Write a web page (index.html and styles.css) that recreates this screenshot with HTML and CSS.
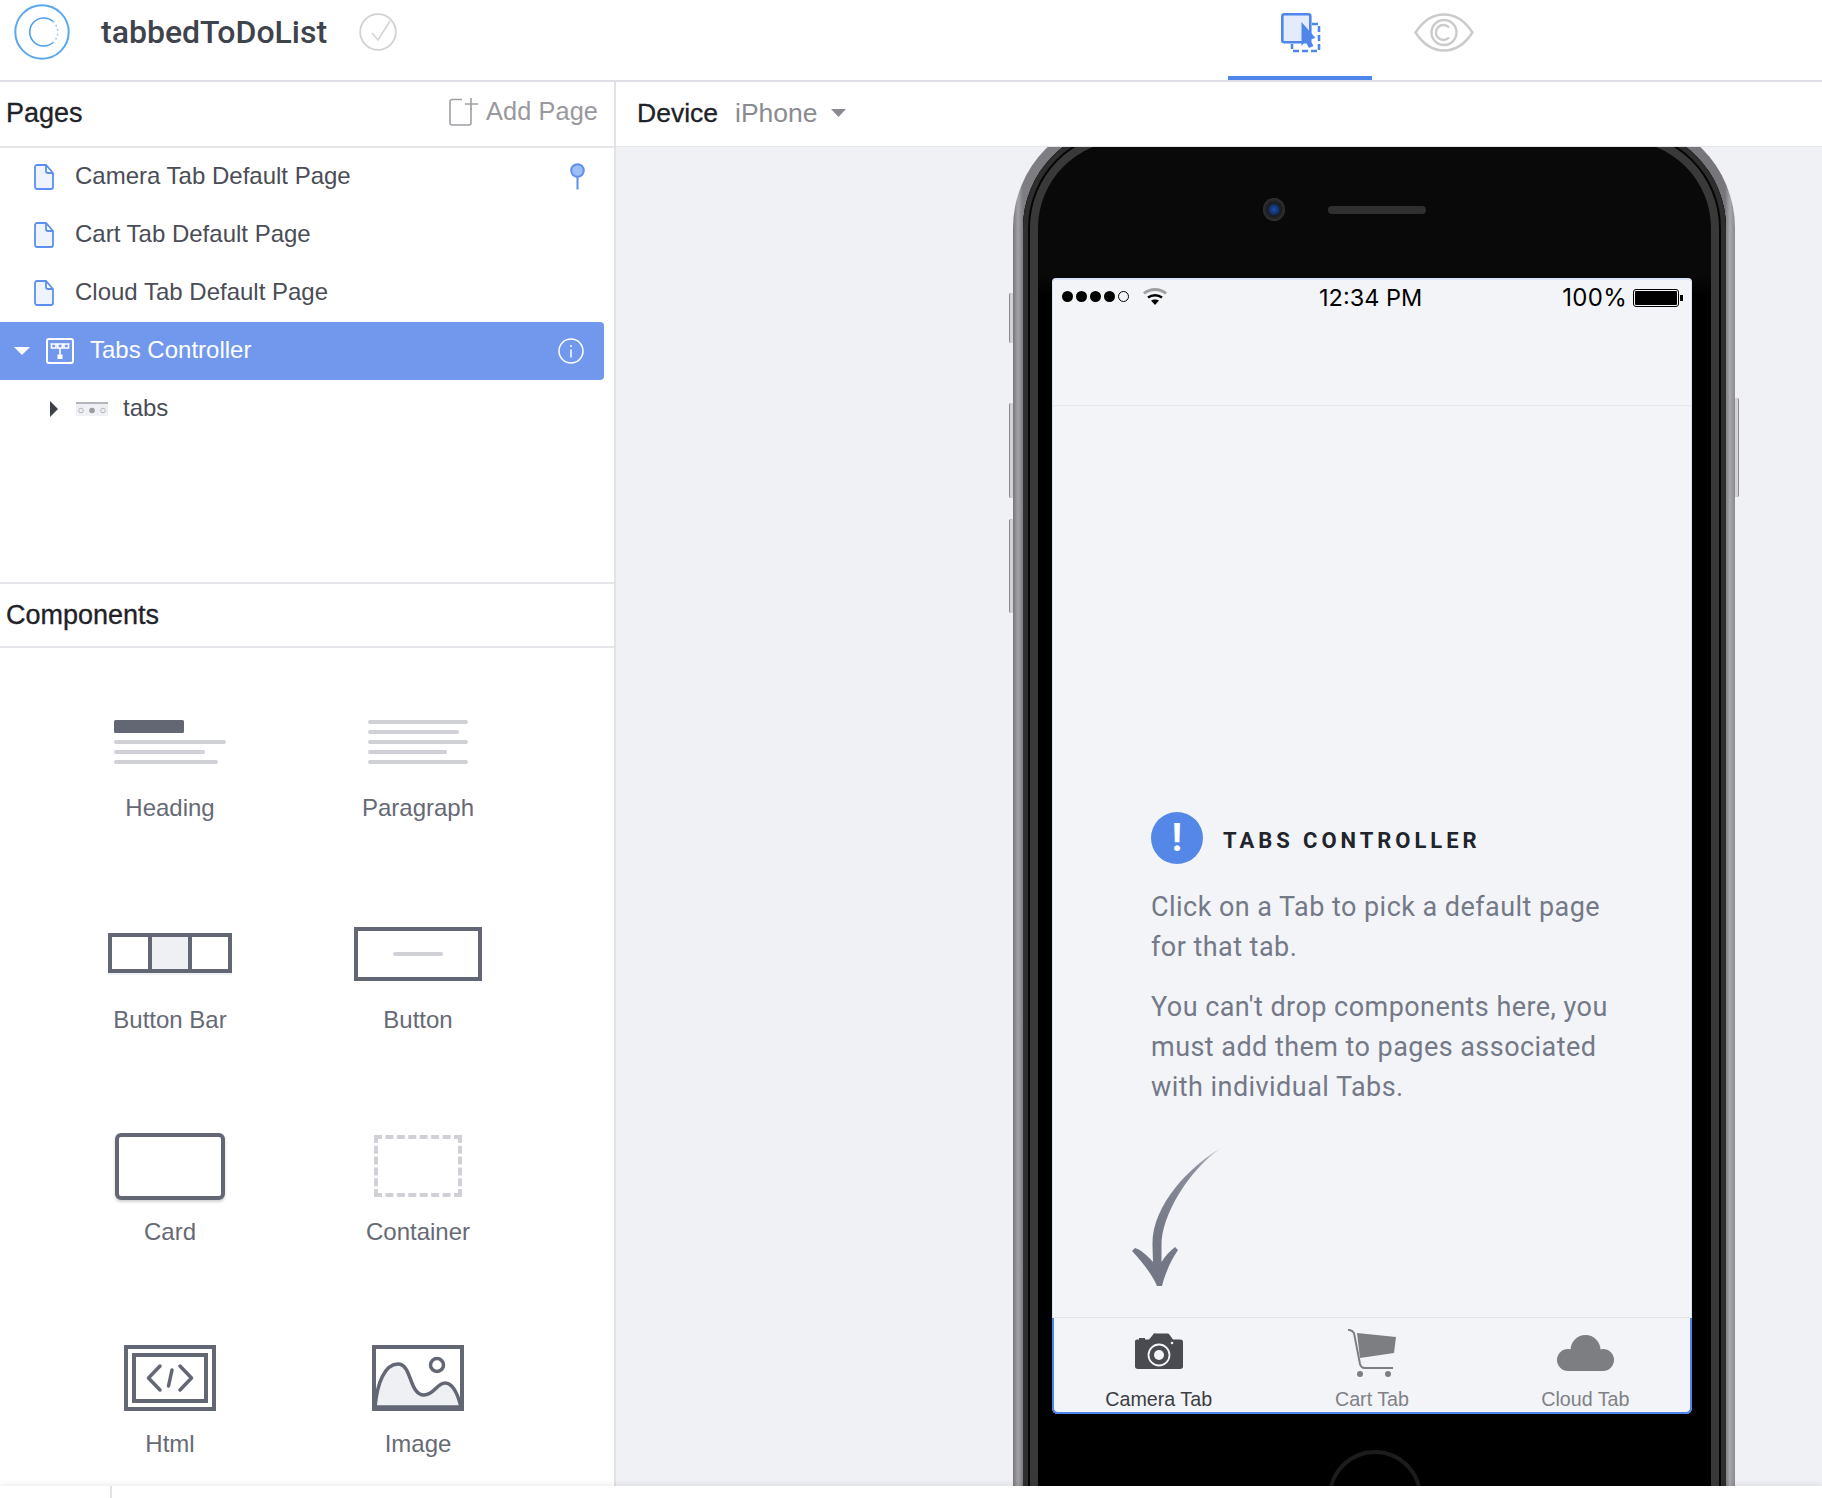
FILE: index.html
```html
<!DOCTYPE html>
<html>
<head lang="en">
    <meta charset="UTF-8">
    <title>tabbedToDoList</title>
    <link rel="stylesheet" href="styles.css">
</head>
<body>
    <header class="topbar">
        <div class="brand">
            <svg class="logo" width="56" height="56" viewBox="0 0 56 56" fill="none">
                <circle cx="28" cy="28" r="26.7" stroke="#5ba8f2" stroke-width="2"/>
                <path d="M39 17.5A14 14 0 1 0 39 38.5" stroke="#4d9cec" stroke-width="1.6"/>
                <path d="M39 17.5A14 14 0 0 1 39 38.5" stroke="#7db9f3" stroke-width="1.4" stroke-dasharray="1.5 3"/>
            </svg>
            <span class="app-name">tabbedToDoList</span>
            <svg class="saved" width="40" height="40" viewBox="0 0 40 40" fill="none" stroke="#d2d2d5" stroke-width="1.8">
                <circle cx="19" cy="20" r="17.8"/>
                <path d="M13 21l6 7L31 9" stroke-width="1.500"/>
            </svg>
        </div>
        <nav class="mode-tabs">
            <div class="mode-tab active">
                <svg width="40" height="40" viewBox="0 0 40 40" fill="none">
                    <rect x="1.3" y="1.3" width="28" height="28" rx="2" fill="#e4ebfb" stroke="#4f86ec" stroke-width="2.6"/>
                    <path d="M31 11h7v27H11v-7" stroke="#4f86ec" stroke-width="2.6" stroke-dasharray="6 3"/>
                    <path d="M20.500 9L34.500 25L29 26.500L32.500 33L28 35L24.500 28.500L20.500 33Z" fill="#4f86ec"/>
                </svg>
            </div>
            <div class="mode-tab">
                <svg width="60" height="40" viewBox="0 0 60 40" fill="none" stroke="#cbcbce" stroke-width="2.4">
                    <path d="M1.500 19.500C9 8 18 1.500 30 1.500S51 8 58.500 19.500C51 31 42 37.500 30 37.500S9 31 1.500 19.500Z"/>
                    <circle cx="30" cy="19.500" r="12.500"/>
                    <path d="M35 14.500A7.500 7.500 0 1 0 35 24.500"/>
                </svg>
            </div>
        </nav>
    </header>

    <main class="workspace">
        <aside class="sidebar">
            <div class="section-head">
                <h2>Pages</h2>
                <div class="add-page">
                    <svg width="29" height="28" viewBox="0 0 29 28" fill="none" stroke="#a0a0a5" stroke-width="1.6">
                        <path d="M13 1.500H3a2 2 0 0 0-2 2V25a2 2 0 0 0 2 2h17a2 2 0 0 0 2-2V10"/>
                        <path d="M22 0v12M16 6h13"/>
                    </svg>
                    <span>Add Page</span>
                </div>
            </div>
            <ul class="tree">
                <li class="tree-row page-row">
                    <svg class="page-icon" width="20" height="26" viewBox="0 0 20 26"><path d="M1 3a2 2 0 0 1 2-2h9l7 8v14a2 2 0 0 1-2 2H3a2 2 0 0 1-2-2Z M12 1v6a2 2 0 0 0 2 2h5"/></svg>
                    <span>Camera Tab Default Page</span>
                    <svg class="pin" width="15" height="27" viewBox="0 0 15 27">
                        <path d="M7.500 12v14.500" stroke="#5d8fee" stroke-width="2"/>
                        <circle cx="7.500" cy="7.500" r="6.300" fill="#9dbdf5" stroke="#5d8fee" stroke-width="2"/>
                    </svg>
                </li>
                <li class="tree-row page-row">
                    <svg class="page-icon" width="20" height="26" viewBox="0 0 20 26"><path d="M1 3a2 2 0 0 1 2-2h9l7 8v14a2 2 0 0 1-2 2H3a2 2 0 0 1-2-2Z M12 1v6a2 2 0 0 0 2 2h5"/></svg>
                    <span>Cart Tab Default Page</span>
                </li>
                <li class="tree-row page-row">
                    <svg class="page-icon" width="20" height="26" viewBox="0 0 20 26"><path d="M1 3a2 2 0 0 1 2-2h9l7 8v14a2 2 0 0 1-2 2H3a2 2 0 0 1-2-2Z M12 1v6a2 2 0 0 0 2 2h5"/></svg>
                    <span>Cloud Tab Default Page</span>
                </li>
                <li class="tree-row selected">
                    <svg class="caret-down" width="16" height="8" viewBox="0 0 16 8"><path d="M0 0h16L8 8Z" fill="#fff"/></svg>
                    <svg width="28" height="26" viewBox="0 0 28 26" fill="none" stroke="#fff" stroke-width="2">
                        <rect x="1" y="1" width="26" height="24" rx="2"/>
                        <path d="M4.500 6h19M5.500 6v4h4.500v-4M11.800 6v4h4.500v-4M18 6v4h4.500v-4M14 10v7" stroke-width="1.600"/>
                        <rect x="11.500" y="16.500" width="5" height="4.500" fill="#fff" stroke="none"/>
                    </svg>
                    <span>Tabs Controller</span>
                    <svg class="info" width="26" height="26" viewBox="0 0 26 26" fill="none" stroke="#fff" stroke-width="1.500">
                        <circle cx="13" cy="13" r="12"/>
                        <path d="M13 11.500V19.500M13 7v2"/>
                    </svg>
                </li>
                <li class="tree-row child-row">
                    <svg class="caret-right" width="8" height="16" viewBox="0 0 8 16"><path d="M0 0l8 8-8 8Z" fill="#3c4049"/></svg>
                    <svg width="32" height="14" viewBox="0 0 32 14">
                        <rect width="32" height="14" fill="#eff0f4"/>
                        <rect width="32" height="2" fill="#b5b6bb"/>
                        <circle cx="5" cy="8.500" r="2.300" fill="none" stroke="#b5b6bb"/>
                        <circle cx="16" cy="8.500" r="2.800" fill="#9a9ba1"/>
                        <circle cx="27" cy="8.500" r="2.300" fill="none" stroke="#b5b6bb"/>
                    </svg>
                    <span>tabs</span>
                </li>
            </ul>
            <div class="section-head components-head">
                <h2>Components</h2>
            </div>
            <div class="component-grid">
                <div class="component">
                    <div class="component-icon">
                        <svg width="112" height="44" viewBox="0 0 112 44">
                            <rect width="70" height="13" rx="1.500" fill="#636773"/>
                            <rect y="20" width="112" height="4" rx="2" fill="#d0d1d6"/>
                            <rect y="30" width="91" height="4" rx="2" fill="#d0d1d6"/>
                            <rect y="40" width="104" height="4" rx="2" fill="#d0d1d6"/>
                        </svg>
                    </div>
                    <span>Heading</span>
                </div>
                <div class="component">
                    <div class="component-icon">
                        <svg width="100" height="44" viewBox="0 0 100 44" fill="#d0d1d6">
                            <rect width="100" height="4" rx="2"/>
                            <rect y="10" width="91" height="4" rx="2"/>
                            <rect y="20" width="100" height="4" rx="2"/>
                            <rect y="30" width="79" height="4" rx="2"/>
                            <rect y="40" width="100" height="4" rx="2"/>
                        </svg>
                    </div>
                    <span>Paragraph</span>
                </div>
                <div class="component">
                    <div class="component-icon">
                        <svg width="124" height="42" viewBox="0 0 124 42">
                            <rect y="40" width="124" height="2" fill="#eff0f4"/>
                            <rect x="41" y="2" width="41" height="36" fill="#eff0f4"/>
                            <path d="M2 2h120v36H2ZM42 2v36M82 2v36" fill="none" stroke="#636773" stroke-width="4"/>
                        </svg>
                    </div>
                    <span>Button Bar</span>
                </div>
                <div class="component">
                    <div class="component-icon">
                        <svg width="128" height="54" viewBox="0 0 128 54">
                            <rect x="2" y="2" width="124" height="50" fill="none" stroke="#636773" stroke-width="4"/>
                            <rect x="39" y="25" width="50" height="4" rx="2" fill="#d0d1d6"/>
                        </svg>
                    </div>
                    <span>Button</span>
                </div>
                <div class="component">
                    <div class="component-icon">
                        <div class="card-shape"></div>
                    </div>
                    <span>Card</span>
                </div>
                <div class="component">
                    <div class="component-icon">
                        <div class="container-shape"></div>
                    </div>
                    <span>Container</span>
                </div>
                <div class="component">
                    <div class="component-icon">
                        <svg width="92" height="66" viewBox="0 0 92 66" fill="none" stroke="#636773">
                            <rect x="2" y="2" width="88" height="62" stroke-width="4"/>
                            <rect x="10" y="10" width="72" height="46" stroke-width="4"/>
                            <path d="M36 21L24.500 33L36 45M56 21L67.500 33L56 45M48 25L44.500 41" stroke-width="3.500" stroke-linecap="round" stroke-linejoin="round"/>
                        </svg>
                    </div>
                    <span>Html</span>
                </div>
                <div class="component">
                    <div class="component-icon">
                        <svg width="92" height="66" viewBox="0 0 92 66" fill="none" stroke="#636773">
                            <path d="M3 62C5 38 13 19 26 19C40 19 37 50 52 50C62 50 65 38 73 38C81 38 86 50 89 62Z" fill="#eff0f4" stroke-width="3.500"/>
                            <rect x="2" y="2" width="88" height="62" stroke-width="4"/>
                            <circle cx="65" cy="20" r="6.500" stroke-width="3.500"/>
                        </svg>
                    </div>
                    <span>Image</span>
                </div>
            </div>
        </aside>

        <section class="stage">
            <div class="device-bar">
                <strong>Device</strong>
                <span class="device-name">iPhone</span>
                <svg width="15" height="8" viewBox="0 0 15 8"><path d="M0 0h15L7.500 8Z" fill="#8a8b91"/></svg>
            </div>
            <div class="canvas">
                <div class="phone">
                    <i class="side-btn btn-mute"></i>
                    <i class="side-btn btn-up"></i>
                    <i class="side-btn btn-down"></i>
                    <i class="side-btn btn-power"></i>
                    <div class="bezel">
                        <div class="phone-front">
                            <div class="front-camera"></div>
                            <div class="speaker"></div>
                        </div>
                        <div class="screen">
                            <div class="status-bar">
                                <div class="signal"><i></i><i></i><i></i><i></i><i class="off"></i></div>
                                <svg class="wifi" width="24" height="18" viewBox="0 0 24 18" fill="none">
                                    <path d="M1 6.500C7 1 17 1 23 6.500" stroke="#a0a0a0" stroke-width="3"/>
                                    <path d="M5 10.500C9 7.500 15 7.500 19 10.500" stroke="#000" stroke-width="2.500"/>
                                    <path d="M8 13.500L12 18L16 13.500C14 12 10 12 8 13.500Z" fill="#000"/>
                                </svg>
                                <span class="clock">12:34 PM</span>
                                <span class="percent">100%</span>
                                <div class="battery"><div class="battery-level"></div></div>
                            </div>
                            <div class="screen-body">
                                <div class="notice-head">
                                    <div class="notice-icon">!</div>
                                    <h3>TABS CONTROLLER</h3>
                                </div>
                                <p>Click on a Tab to pick a default page for that tab.</p>
                                <p>You can't drop components here, you must add them to pages associated with individual Tabs.</p>
                                <svg class="arrow" width="92" height="142" viewBox="0 0 92 142">
                                    <defs>
                                        <linearGradient id="arrowFill" x1="0.950" y1="0" x2="0.300" y2="0.700">
                                            <stop offset="0" stop-color="#c9cbd3"/>
                                            <stop offset="0.250" stop-color="#8d909c"/>
                                            <stop offset="1" stop-color="#747886"/>
                                        </linearGradient>
                                    </defs>
                                    <path d="M91 2C60 20 21 60 22.500 100L23 116C18 110 10 103 5 102L2 105C12 116 22 128 27 140L32 140C35 128 41 114 48 104L45 101C40 105 35 110 31.500 116L31.500 100C31 70 58 25 91 2Z" fill="url(#arrowFill)"/>
                                </svg>
                            </div>
                            <div class="tab-bar">
                                <div class="tab current">
                                    <svg width="48" height="48" viewBox="0 0 48 48">
                                        <path d="M2 8H4V6H10V8H14L18 2C18.500 1 19 0 20.500 6e-1H32C33 6e-1 34 1 34.500 2L38 8H45A3 3 0 0 1 48 11V41A3 3 0 0 1 45 44H3A3 3 0 0 1 0 41V10A2 2 0 0 1 2 8Z" fill="#4a4b50" transform="translate(0 4) scale(1 .82)"/>
                                        <circle cx="24" cy="26" r="10.500" fill="none" stroke="#f3f4f8" stroke-width="1.800"/>
                                        <circle cx="24" cy="26" r="5" fill="#f3f4f8"/>
                                        <circle cx="37" cy="14" r="1.300" fill="#f3f4f8"/>
                                    </svg>
                                    <span>Camera Tab</span>
                                </div>
                                <div class="tab">
                                    <svg width="48" height="48" viewBox="0 0 48 48" fill="#7d7e82">
                                        <path d="M0 .800Q4 .800 6 4L12 35Q13 39 17 39H45" fill="none" stroke="#7d7e82" stroke-width="2"/>
                                        <path d="M9 4L48 8L46 24L12 29Z"/>
                                        <circle cx="12" cy="45" r="3"/>
                                        <circle cx="40" cy="45" r="3"/>
                                    </svg>
                                    <span>Cart Tab</span>
                                </div>
                                <div class="tab">
                                    <svg width="57" height="48" viewBox="0 0 57 48" fill="#7d7e82">
                                        <circle cx="28.500" cy="21" r="15"/>
                                        <circle cx="11" cy="31" r="11"/>
                                        <circle cx="46" cy="31" r="11"/>
                                        <rect x="11" y="26" width="35" height="16"/>
                                    </svg>
                                    <span>Cloud Tab</span>
                                </div>
                            </div>
                        </div>
                        <div class="home-button"></div>
                    </div>
                </div>
            </div>
        </section>
    </main>
    <footer class="bottom-bar"><div class="bottom-cell"></div></footer>
</body>
</html>
```
FILE: styles.css
```css
*{
    padding: 0;
    margin: 0;
    box-sizing: border-box;
}
html, body{
    height: 1498px;
    overflow: hidden;
    background: #fff;
}
body{
    font-family: "Liberation Sans", Arial, sans-serif;
    color: #3c4049;
}
svg{
    display: block;
    flex: none;
}
ul{
    list-style: none;
}

/* top bar */
.topbar{
    height: 82px;
    display: flex;
    border-bottom: 2px solid #dfdfe5;
}
.brand{
    height: 64px;
    display: flex;
    align-items: center;
    padding-left: 14px;
}
.app-name{
    margin-left: 31px;
    font-family: Roboto, sans-serif;
    font-weight: 500;
    font-size: 32px;
    color: #3f434c;
}
.saved{
    margin-left: 32px;
}
.mode-tabs{
    display: flex;
    margin-left: auto;
    margin-right: 306px;
}
.mode-tab{
    width: 144px;
    height: 80px;
    display: flex;
    justify-content: center;
    padding-top: 13px;
}
.mode-tab.active{
    border-bottom: 4px solid #4f86ec;
}
.mode-tab.active svg{
    margin-left: 2px;
}

/* layout */
.workspace{
    height: 1404px;
    display: flex;
}
.sidebar{
    width: 616px;
    flex: none;
    border-right: 2px solid #e2e2e7;
    overflow: hidden;
}
.stage{
    flex: 1;
    display: flex;
    flex-direction: column;
    min-width: 0;
}
.bottom-bar{
    height: 12px;
    position: relative;
    background: #fff;
    box-shadow: 0 -2px 6px rgba(0, 0, 0, 0.08);
}
.bottom-cell{
    width: 112px;
    height: 12px;
    border-right: 2px solid #e2e2e7;
}

/* pages */
.section-head{
    height: 66px;
    display: flex;
    align-items: center;
    justify-content: space-between;
    padding: 0 16px 0 6px;
    border-bottom: 2px solid #e6e6ea;
}
.section-head h2{
    font-size: 27px;
    font-weight: 400;
    color: #202228;
    -webkit-text-stroke: 0.3px #202228;
    margin-top: -2px;
}
.components-head h2{
    margin-top: 0;
}
.add-page{
    display: flex;
    align-items: center;
    gap: 8px;
    margin-top: -5px;
    font-size: 25.300px;
    letter-spacing: 0.100px;
    color: #98989d;
}
.tree{
    height: 436px;
    border-bottom: 2px solid #e6e6ea;
}
.tree-row{
    width: 604px;
    height: 58px;
    display: flex;
    align-items: center;
    font-size: 24px;
    color: #4a4d56;
    border-radius: 0 4px 4px 0;
}
.page-row{
    padding-left: 34px;
    gap: 21px;
}
.page-row span{
    margin-top: -2px;
}
.page-icon{
    fill: #eef3fd;
    stroke: #5d8fee;
    stroke-width: 1.800;
}
.pin{
    margin-left: auto;
    margin-right: 19px;
    margin-top: -2px;
}
.tree-row.selected{
    background: #7198ec;
    color: #fff;
    padding-left: 14px;
}
.selected .caret-down{
    margin-right: 16px;
}
.selected span{
    margin-left: 16px;
    margin-top: -2px;
}
.selected .info{
    margin-left: auto;
    margin-right: 20px;
}
.child-row{
    padding-left: 50px;
}
.child-row svg:nth-child(2){
    margin-left: 18px;
}
.child-row span{
    margin-left: 15px;
    margin-top: -2px;
}

/* components */
.components-head{
    height: 64px;
}
.component-grid{
    display: grid;
    grid-template-columns: 248px 248px;
    row-gap: 94px;
    padding: 57px 0 0 46px;
}
.component{
    display: flex;
    flex-direction: column;
    align-items: center;
    font-size: 24px;
    line-height: 30px;
    color: #666a75;
}
.component-icon{
    height: 74px;
    margin-bottom: 14px;
    display: flex;
    align-items: center;
    justify-content: center;
}
.card-shape{
    width: 110px;
    height: 67px;
    border: 4px solid #636773;
    border-radius: 6px;
    box-shadow: 0 2px 3px rgba(0, 0, 0, 0.18);
}
.container-shape{
    width: 88px;
    height: 62px;
    border: 4px dashed #d0d1d6;
}

/* device */
.device-bar{
    height: 65px;
    flex: none;
    display: flex;
    align-items: center;
    padding: 0 0 2px 21px;
    font-size: 26.500px;
    background: #fff;
    border-bottom: 1px solid #e6e6ea;
}
.device-bar strong{
    font-weight: 400;
    color: #202228;
    -webkit-text-stroke: 0.3px #202228;
}
.device-name{
    margin-left: 17px;
    margin-right: 13px;
    color: #8a8b91;
}
.canvas{
    flex: 1;
    overflow: hidden;
    background: #f0f1f5;
}
.phone{
    width: 722px;
    height: 1500px;
    margin: -31px 0 0 397px;
    padding: 10px 9px 0 10px;
    position: relative;
    border-radius: 112px 112px 0 0;
    background: linear-gradient(90deg, #77777b 0, #a3a3a7 5px, #7e7e82 10px, #77777b 712px, #a8a8ac 717px, #8a8a8e 722px);
}
.side-btn{
    position: absolute;
    display: block;
    width: 4px;
    left: -4px;
    background: #d2d3d8;
    border-radius: 2px 0 0 2px;
    border-left: 1px solid #8a8a8f;
}
.btn-mute{
    top: 177px;
    height: 50px;
}
.btn-up{
    top: 287px;
    height: 95px;
}
.btn-down{
    top: 403px;
    height: 94px;
}
.btn-power{
    top: 282px;
    height: 99px;
    left: auto;
    right: -4px;
    border-left: 0;
    border-right: 1px solid #8a8a8f;
    border-radius: 0 2px 2px 0;
}
.bezel{
    height: 1490px;
    padding: 0 33px 0 29px;
    border-radius: 102px 102px 0 0;
    background: linear-gradient(180deg, #090909 0, #090909 150px, #000 170px);
    box-shadow: inset 0 0 0 5px #2e2e2f, inset 0 0 0 7px #050505, inset 0 0 0 15px #39393a;
}
.phone-front{
    height: 152px;
    display: flex;
    align-items: center;
    padding: 15px 0 0 211px;
}
.front-camera{
    width: 22px;
    height: 23px;
    border-radius: 50%;
    background: radial-gradient(circle, #1b4fa8 0, #12306b 28%, #1b1b1d 42%, #4a4a4c 100%);
}
.speaker{
    width: 98px;
    height: 8px;
    margin-left: 43px;
    border-radius: 4px;
    background: #303031;
}
.screen{
    width: 640px;
    height: 1136px;
    display: flex;
    flex-direction: column;
    background: #f3f4f8;
    border-top: 2px solid #dbe3f6;
    border-left: 1px solid #dbe3f6;
    border-right: 1px solid #dbe3f6;
    border-radius: 4px 4px 6px 6px;
}
.status-bar{
    height: 126px;
    padding: 0 12px 0 9px;
    display: flex;
    align-items: flex-start;
    font-family: Inter, "Liberation Sans", sans-serif;
    font-size: 24px;
    color: #000;
    border-bottom: 1px solid #e6e8ee;
}
.signal{
    display: flex;
    gap: 3px;
    margin-top: 11px;
}
.signal i{
    display: block;
    width: 11px;
    height: 11px;
    border-radius: 50%;
    background: #000;
}
.signal i.off{
    background: none;
    border: 1px solid #000;
}
.wifi{
    margin: 7px 0 0 14px;
}
.clock{
    margin-left: 152px;
    margin-top: 3px;
    font-size: 23.500px;
}
.percent{
    margin-left: auto;
    margin-top: 3px;
    letter-spacing: 0.300px;
}
.battery{
    width: 46px;
    height: 18px;
    margin: 9px 0 0 6px;
    position: relative;
    border: 1px solid #000;
    border-radius: 3px;
    padding: 1px;
}
.battery:after{
    content: "";
    position: absolute;
    right: -5px;
    top: 5px;
    width: 3px;
    height: 6px;
    background: #000;
}
.battery-level{
    height: 100%;
    background: #000;
    border-radius: 1px;
}
.screen-body{
    flex: 1;
    padding: 406px 72px 0 98px;
    font-family: Roboto, sans-serif;
}
.notice-head{
    display: flex;
    align-items: center;
    gap: 20px;
    margin-bottom: 23px;
}
.notice-icon{
    width: 52px;
    height: 52px;
    border-radius: 50%;
    background: #5487e8;
    color: #fff;
    text-align: center;
    font-size: 38px;
    font-weight: 700;
    line-height: 52px;
}
.notice-head h3{
    margin-top: 4px;
    font-size: 22px;
    font-weight: 700;
    letter-spacing: 3.950px;
    color: #22242c;
}
.screen-body p{
    font-size: 27px;
    line-height: 40px;
    letter-spacing: 0.450px;
    color: #747988;
    margin-bottom: 20px;
}
.arrow{
    margin: 39px 0 0 -21px;
}
.tab-bar{
    height: 97px;
    margin: 0 -1px;
    display: flex;
    padding-top: 11px;
    border-top: 1px solid #e2e4ea;
    border-radius: 0 0 6px 6px;
    box-shadow: inset 2px 0 #4f86ec, inset -2px 0 #4f86ec, inset 0 -2px #4f86ec;
}
.tab{
    flex: 1;
    display: flex;
    flex-direction: column;
    align-items: center;
    font-size: 19.700px;
    line-height: 24px;
    color: #808186;
}
.tab span{
    margin-top: 10px;
}
.tab.current{
    color: #3c3d42;
}
.home-button{
    width: 94px;
    height: 94px;
    margin: 36px 0 0 276px;
    border: 4px solid #1c1c1e;
    border-radius: 50%;
}
```
